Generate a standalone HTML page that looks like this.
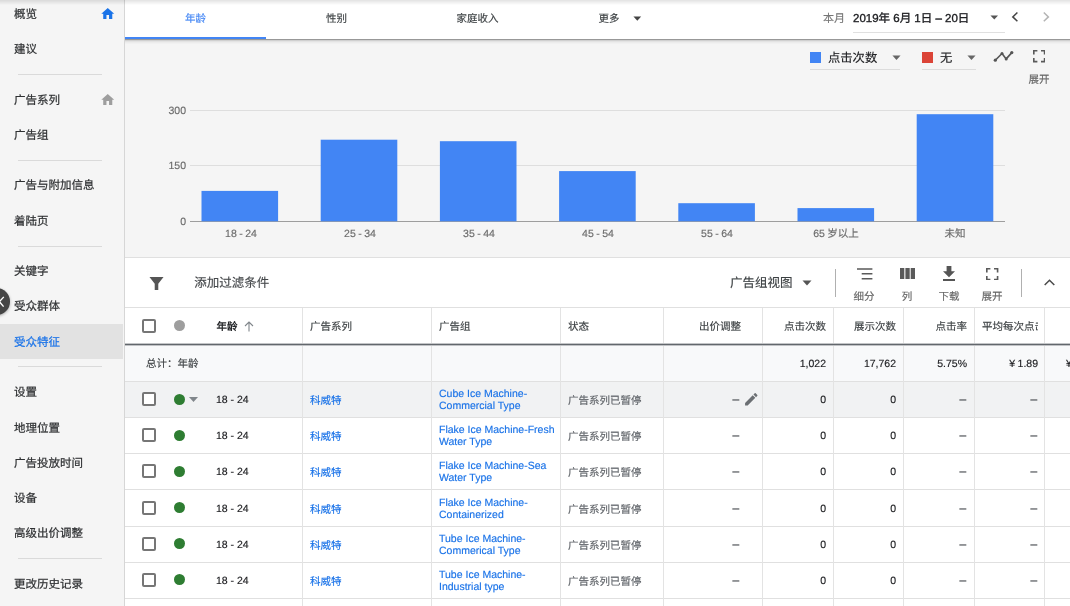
<!DOCTYPE html>
<html lang="zh-CN">
<head>
<meta charset="utf-8">
<title>受众特征</title>
<style>
*{box-sizing:border-box;margin:0;padding:0}
html,body{width:1070px;height:606px;overflow:hidden}
body{text-rendering:geometricPrecision;font-family:"Liberation Sans",sans-serif;background:#f5f5f5;color:#3c4043;position:relative;font-size:11.5px}
#root{-webkit-text-stroke-width:0.15px;position:absolute;left:0;top:0;width:1070px;height:606px;will-change:transform}
.abs{position:absolute}
/* sidebar */
#side{position:absolute;left:0;top:0;width:125px;height:606px;background:#f5f5f5;border-right:1px solid #d6d6d6}
#side .it{-webkit-text-stroke-width:0.22px;position:absolute;left:14px;height:18px;line-height:18px;font-size:11.5px;color:#2f3133;white-space:nowrap}
#side .dv{position:absolute;left:18px;width:84px;height:1px;background:#dadada}
#side .act{position:absolute;left:0;top:324px;width:123px;height:35px;background:#e2e2e2}
/* tabs */
#tabs{position:absolute;left:125px;top:0;width:945px;height:39px;background:#fff}
#tabs .tb{position:absolute;top:1px;height:37px;line-height:37px;text-align:center;font-size:10.5px;color:#3c4043}
#topsh{position:absolute;left:0;top:0;width:1070px;height:5px;background:linear-gradient(rgba(0,0,0,.115),rgba(0,0,0,0))}
#tabsh{position:absolute;left:125px;top:39px;width:945px;height:6px;background:linear-gradient(rgba(0,0,0,.38) 0 1px,rgba(0,0,0,.15) 1px 2px,rgba(0,0,0,.07) 2px 3px,rgba(0,0,0,.035) 3px 4px,rgba(0,0,0,.015) 4px 5px,rgba(0,0,0,0) 5px)}
/* chart */
#chart{position:absolute;left:125px;top:40px;width:945px;height:217px;background:#f5f5f5}
.gl{position:absolute;left:190px;width:815px;height:1px;background:#dedede}
.yl{position:absolute;width:40px;text-align:right;left:146px;font-size:10.5px;color:#6b6b6b;height:12px;line-height:12px}
.bar{position:absolute;width:77px;background:#4285f4}
.xl{position:absolute;width:119px;text-align:center;font-size:10.5px;color:#6b6b6b;top:228px;word-spacing:-0.4px;height:12px;line-height:12px}
/* toolbar */
#tool{position:absolute;left:125px;top:257px;width:945px;height:51px;background:#fff;border-top:1px solid #e0e0e0}
/* table */
#tbl{position:absolute;left:125px;top:307px;width:945px;height:299px;background:#fff}
.row{position:absolute;left:125px;width:945px;border-bottom:1px solid #e0e0e0}
.vl{position:absolute;top:308px;width:1px;height:298px;background:#e3e3e3}
.c{position:absolute;white-space:nowrap;font-size:10.5px;height:14px;line-height:14px;margin-top:1px}
.h{color:#3c4043}
.cb{position:absolute;left:142px;width:14px;height:14px;border:2px solid #767676;border-radius:2px;background:#fff}
.dot{position:absolute;left:174px;width:11px;height:11px;border-radius:50%;background:#2e7d32}
.lk{color:#1a73e8}
.num{text-align:right}
.gr{color:#5f6368}
.v{color:#202124}
.ds{font-size:12px;color:#4a4e52;-webkit-text-stroke-width:0.2px;margin-top:-0.5px}
.tl{top:30.5px;width:40px;text-align:center;font-size:10.5px;color:#666;height:16px;line-height:16px}
</style>
</head>
<body><div id="root">
<div id="side">
  <div class="act"></div>
  <div class="it" style="top:6px">概览</div>
  <div class="it" style="top:41px">建议</div>
  <div class="dv" style="top:74px"></div>
  <div class="it" style="top:92px">广告系列</div>
  <div class="it" style="top:127px">广告组</div>
  <div class="dv" style="top:160px"></div>
  <div class="it" style="top:177px">广告与附加信息</div>
  <div class="it" style="top:213px">着陆页</div>
  <div class="dv" style="top:246px"></div>
  <div class="it" style="top:263px">关键字</div>
  <div class="it" style="top:298px">受众群体</div>
  <div class="it" style="top:334px;color:#1a73e8">受众特征</div>
  <div class="it" style="top:384px">设置</div>
  <div class="it" style="top:420px">地理位置</div>
  <div class="it" style="top:455px">广告投放时间</div>
  <div class="it" style="top:490px">设备</div>
  <div class="it" style="top:525px">高级出价调整</div>
  <div class="dv" style="top:366px"></div>
  <div class="dv" style="top:558px"></div>
  <div class="it" style="top:576px">更改历史记录</div>
  <svg class="abs" style="left:100px;top:6.2px" width="15.5" height="15.5" viewBox="0 0 24 24"><path fill="#1a73e8" d="M10 20v-6h4v6h5v-8h3L12 3 2 12h3v8z"/></svg>
  <svg class="abs" style="left:100px;top:92.2px" width="15.5" height="15.5" viewBox="0 0 24 24"><path fill="#9e9e9e" d="M10 20v-6h4v6h5v-8h3L12 3 2 12h3v8z"/></svg>
  <div class="abs" style="left:-16.7px;top:288.3px;width:26.6px;height:26.6px;border-radius:50%;background:#454545;box-shadow:0 1px 3px rgba(0,0,0,.3)"></div>
  <svg class="abs" style="left:0;top:294px" width="8" height="16" viewBox="0 0 8 16"><path d="M3.8 2.9L-0.6 7.7L3.6 12.6" stroke="#fff" stroke-width="1.4" fill="none"/></svg>
</div>

<div id="chart">
</div>
<div class="gl" style="top:110px"></div>
<div class="gl" style="top:165px"></div>
<div class="gl" style="top:221px;background:#9e9e9e"></div>
<div class="yl" style="top:105px">300</div>
<div class="yl" style="top:160px">150</div>
<div class="yl" style="top:216px">0</div>
<svg class="abs" style="left:125px;top:40px" width="945" height="217" viewBox="0 0 945 217" fill="#4285f4"><rect x="76.5" y="150.9" width="76.6" height="30.4"/><rect x="195.7" y="99.7" width="76.6" height="81.6"/><rect x="314.9" y="101.2" width="76.6" height="80.1"/><rect x="434.1" y="131.1" width="76.6" height="50.2"/><rect x="553.3" y="163.2" width="76.6" height="18.1"/><rect x="672.5" y="168.1" width="76.6" height="13.2"/><rect x="791.7" y="74.2" width="76.6" height="107.1"/></svg>
<div class="xl" style="left:181.5px">18 - 24</div>
<div class="xl" style="left:300.5px">25 - 34</div>
<div class="xl" style="left:419.5px">35 - 44</div>
<div class="xl" style="left:538.5px">45 - 54</div>
<div class="xl" style="left:657.5px">55 - 64</div>
<div class="xl" style="left:776.5px">65 岁以上</div>
<div class="xl" style="left:895.5px">未知</div>


<div id="legend">
  <div class="abs" style="left:810px;top:52px;width:11px;height:11px;background:#4285f4"></div>
  <div class="abs" style="left:828px;top:49px;font-size:12.3px;color:#202124;height:18px;line-height:18px;white-space:nowrap">点击次数</div>
  <svg class="abs" style="left:891.6px;top:55.2px" width="9" height="5.4" viewBox="0 0 10 6"><path d="M0.5 0.5h9L5 5.5z" fill="#666"/></svg>
  <div class="abs" style="left:810px;top:69px;width:90px;height:1px;background:#dcdcdc"></div>
  <div class="abs" style="left:922px;top:52px;width:11px;height:11px;background:#db4437"></div>
  <div class="abs" style="left:940px;top:49px;font-size:12.3px;color:#202124;height:18px;line-height:18px">无</div>
  <svg class="abs" style="left:966.6px;top:55.2px" width="9" height="5.4" viewBox="0 0 10 6"><path d="M0.5 0.5h9L5 5.5z" fill="#666"/></svg>
  <div class="abs" style="left:922px;top:69px;width:54px;height:1px;background:#dcdcdc"></div>
  <svg class="abs" style="left:993px;top:49px" width="22" height="16" viewBox="0 0 22 16"><path d="M2.3 11.2L9 4.5L13.2 9.9L18.8 3.6" stroke="#555" stroke-width="1.6" fill="none" stroke-linejoin="round"/><circle cx="2.3" cy="11.2" r="1.6" fill="#555"/><circle cx="9" cy="4.5" r="1.5" fill="#555"/><circle cx="13.2" cy="9.9" r="1.5" fill="#555"/><circle cx="18.8" cy="3.6" r="1.6" fill="#555"/></svg>
  <svg class="abs" style="left:1032.8px;top:50.3px" width="12.4" height="12.4" viewBox="0 0 13 13"><path d="M0.85 4.6V0.85H4.6M8.4 0.85h3.75V4.6M12.15 8.4v3.75H8.4M4.6 12.15H0.85V8.4" stroke="#5a5a5a" stroke-width="1.7" fill="none"/></svg>
  <div class="abs" style="left:1019px;top:72px;width:40px;text-align:center;font-size:10.5px;color:#666;height:16px;line-height:16px">展开</div>
</div>
<div id="tabs">
  <div class="tb" style="left:0;width:141px;color:#4285f4">年龄</div>
  <div class="tb" style="left:141px;width:141px">性别</div>
  <div class="tb" style="left:282px;width:141px">家庭收入</div>
  <div class="tb" style="left:473px;width:22px">更多</div>
  <div class="abs" style="left:0;top:37px;width:141px;height:2px;background:#4285f4"></div>
  <svg class="abs" style="left:508.2px;top:15.6px" width="8.6" height="5.2" viewBox="0 0 10 6"><path d="M0.5 0.5h9L5 5.5z" fill="#444"/></svg>
  <div class="abs" style="left:698px;top:10px;font-size:11px;color:#757575;height:18px;line-height:18px">本月</div>
  <div class="abs" style="left:728px;top:10px;font-size:11.5px;color:#202124;height:18px;line-height:18px;font-weight:500;-webkit-text-stroke:0.35px #202124;white-space:nowrap" id="date">2019年 6月 1日 – 20日</div>
  <div class="abs" style="left:728px;top:32px;width:152px;height:1px;background:#e0e0e0"></div>
  <svg class="abs" style="left:864.7px;top:15px" width="8.6" height="4.8" viewBox="0 0 10 6" preserveAspectRatio="none"><path d="M0.5 0.5h9L5 5.5z" fill="#555"/></svg>
  <svg class="abs" style="left:885px;top:10px" width="10" height="14" viewBox="0 0 10 14"><path d="M7.4 2.5L2.8 6.9L7.4 11.3" stroke="#444" stroke-width="1.5" fill="none"/></svg>
  <svg class="abs" style="left:916px;top:10px" width="10" height="14" viewBox="0 0 10 14"><path d="M2.8 2.5L7.4 6.9L2.8 11.3" stroke="#b4b4b4" stroke-width="1.5" fill="none"/></svg>
</div>
<div id="tabsh"></div>
<div id="topsh"></div>

<div id="tool">
  <svg class="abs" style="left:24.2px;top:17.6px" width="15" height="15" viewBox="0 0 16 16"><path d="M0.5 1h15L9.9 8.2V15H6.1V8.2z" fill="#555"/></svg>
  <div class="abs" style="left:69.3px;top:15px;font-size:12.5px;color:#45484b;height:20px;line-height:20px;white-space:nowrap">添加过滤条件</div>
  <div class="abs" style="left:605px;top:15px;font-size:12.5px;color:#3c4043;height:20px;line-height:20px;white-space:nowrap">广告组视图</div>
  <svg class="abs" style="left:677px;top:22px" width="10" height="6" viewBox="0 0 10 6"><path d="M0.5 0.5h9L5 5.5z" fill="#555"/></svg>
  <div class="abs" style="left:710px;top:11px;width:1px;height:28px;background:#b0b0b0"></div>
  <svg class="abs" style="left:731.8px;top:9.5px" width="16" height="12" viewBox="0 0 16 12"><path d="M0 0.9h15.4M4.7 5.7h10.7M4.7 10.8h10.7" stroke="#5a5a5a" stroke-width="1.5"/></svg>
  <div class="abs tl" style="left:719px">细分</div>
  <svg class="abs" style="left:775.2px;top:9.7px" width="15" height="11.3" viewBox="0 0 15 12" preserveAspectRatio="none"><path d="M0 0h4.3v12H0zM5.4 0h4.3v12H5.4zM10.7 0H15v12h-4.3z" fill="#5a5a5a"/></svg>
  <div class="abs tl" style="left:762px">列</div>
  <svg class="abs" style="left:818px;top:8px" width="12" height="15" viewBox="0 0 12 15"><path d="M3.6 0h4.8v5.2H12L6 11.2L0 5.2h3.6zM0 13h12v2H0z" fill="#555"/></svg>
  <div class="abs tl" style="left:804px">下载</div>
  <svg class="abs" style="left:861.2px;top:9.7px" width="12.4" height="12.4" viewBox="0 0 13 13"><path d="M0.85 4.6V0.85H4.6M8.4 0.85h3.75V4.6M12.15 8.4v3.75H8.4M4.6 12.15H0.85V8.4" stroke="#5a5a5a" stroke-width="1.7" fill="none"/></svg>
  <div class="abs tl" style="left:847px">展开</div>
  <div class="abs" style="left:896px;top:11px;width:1px;height:28px;background:#b0b0b0"></div>
  <svg class="abs" style="left:918px;top:20px" width="13" height="9" viewBox="0 0 13 9"><path d="M1.7 7L6.5 2.2L11.3 7" stroke="#4a4a4a" stroke-width="1.5" fill="none"/></svg>
</div>
<div id="tbl"></div>
<div class="abs" style="left:125px;top:346px;width:945px;height:35px;background:#f8f9fa"></div>
<div class="abs" style="left:125px;top:382px;width:945px;height:35px;background:#f1f2f3"></div>
<div class="abs" style="left:125px;top:307px;width:945px;height:1px;background:#e0e0e0"></div>
<div class="abs" style="left:125px;top:381px;width:945px;height:1px;background:#e0e0e0"></div>
<div class="abs" style="left:125px;top:417px;width:945px;height:1px;background:#e0e0e0"></div>
<div class="abs" style="left:125px;top:453px;width:945px;height:1px;background:#e0e0e0"></div>
<div class="abs" style="left:125px;top:489px;width:945px;height:1px;background:#e0e0e0"></div>
<div class="abs" style="left:125px;top:526px;width:945px;height:1px;background:#e0e0e0"></div>
<div class="abs" style="left:125px;top:562px;width:945px;height:1px;background:#e0e0e0"></div>
<div class="abs" style="left:125px;top:598px;width:945px;height:1px;background:#e0e0e0"></div>
<div class="vl" style="left:302px"></div>
<div class="vl" style="left:431px"></div>
<div class="vl" style="left:560px"></div>
<div class="vl" style="left:663px"></div>
<div class="vl" style="left:762px"></div>
<div class="vl" style="left:833px"></div>
<div class="vl" style="left:903px"></div>
<div class="vl" style="left:974px"></div>
<div class="vl" style="left:1044px"></div>
<div class="abs" style="left:125px;top:343px;width:945px;height:1px;background:#c3c5c7"></div><div class="abs" style="left:125px;top:344px;width:945px;height:1px;background:#62676c"></div><div class="abs" style="left:125px;top:345px;width:945px;height:1px;background:#c0c2c5"></div>
<div class="cb" style="top:319px"></div>
<div class="dot" style="top:320px;background:#9e9e9e"></div>
<div class="c h" style="left:216.5px;top:319px;font-weight:bold;color:#26282b;-webkit-text-stroke-width:0">年龄</div>
<svg class="abs" style="left:244px;top:321px" width="10" height="11" viewBox="0 0 10 11"><path d="M5 10.5V1.2M1 5L5 1L9 5" stroke="#80868b" stroke-width="1.1" fill="none"/></svg>
<div class="c h" style="left:310px;top:319px">广告系列</div>
<div class="c h" style="left:439px;top:319px">广告组</div>
<div class="c h" style="left:568px;top:319px">状态</div>
<div class="c h num" style="left:621px;width:120px;top:319px;">出价调整</div>
<div class="c h num" style="left:706px;width:120px;top:319px;">点击次数</div>
<div class="c h num" style="left:776px;width:120px;top:319px;">展示次数</div>
<div class="c h num" style="left:847px;width:120px;top:319px;">点击率</div>
<div class="c h" style="left:982px;top:319px;width:56px;overflow:hidden">平均每次点击费用</div>
<div class="c" style="left:146px;top:356px;font-size:10.5px;color:#3c4043">总计：年龄</div>
<div class="c v num" style="left:706px;width:120px;top:356px;">1,022</div>
<div class="c v num" style="left:776px;width:120px;top:356px;">17,762</div>
<div class="c v num" style="left:847px;width:120px;top:356px;">5.75%</div>
<div class="c v num" style="left:918px;width:120px;top:356px;"><span style="margin-right:2.5px">¥</span>1.89</div>
<div class="c v" style="left:1066px;top:356px">¥</div>
<div class="cb" style="top:392px"></div>
<div class="dot" style="top:394px"></div>
<svg class="abs" style="left:189px;top:397px" width="9" height="5" viewBox="0 0 9 5"><path d="M0 0h9L4.5 5z" fill="#80868b"/></svg>
<div class="c v" style="left:216px;top:392px">18 - 24</div>
<div class="c lk" style="left:310px;top:393px;font-size:10.5px">科威特</div>
<div class="c lk" style="left:439px;top:386.5px;line-height:12.5px;height:25px">Cube Ice Machine-<br>Commercial Type</div>
<div class="c gr" style="left:568px;top:393px;font-size:10.5px">广告系列已暂停</div>
<div class="c v ds" style="left:732.5px;top:392px">–</div>
<svg class="abs" style="left:742.8px;top:391.1px" width="16.6" height="16.6" viewBox="0 0 24 24"><path fill="#6b6f73" d="M3 17.25V21h3.75L17.81 9.94l-3.75-3.75L3 17.25zM20.71 7.04a1 1 0 000-1.41l-2.34-2.34a1 1 0 00-1.41 0l-1.83 1.83 3.75 3.75 1.83-1.83z"/></svg>
<div class="c v num" style="left:706px;width:120px;top:392px;">0</div>
<div class="c v num" style="left:776px;width:120px;top:392px;">0</div>
<div class="c v ds" style="left:959.5px;top:392px">–</div>
<div class="c v ds" style="left:1030.5px;top:392px">–</div>
<div class="cb" style="top:428px"></div>
<div class="dot" style="top:430px"></div>
<div class="c v" style="left:216px;top:428px">18 - 24</div>
<div class="c lk" style="left:310px;top:429px;font-size:10.5px">科威特</div>
<div class="c lk" style="left:439px;top:422.5px;line-height:12.5px;height:25px">Flake Ice Machine-Fresh<br>Water Type</div>
<div class="c gr" style="left:568px;top:429px;font-size:10.5px">广告系列已暂停</div>
<div class="c v ds" style="left:732.5px;top:428px">–</div>
<div class="c v num" style="left:706px;width:120px;top:428px;">0</div>
<div class="c v num" style="left:776px;width:120px;top:428px;">0</div>
<div class="c v ds" style="left:959.5px;top:428px">–</div>
<div class="c v ds" style="left:1030.5px;top:428px">–</div>
<div class="cb" style="top:464px"></div>
<div class="dot" style="top:466px"></div>
<div class="c v" style="left:216px;top:464px">18 - 24</div>
<div class="c lk" style="left:310px;top:465px;font-size:10.5px">科威特</div>
<div class="c lk" style="left:439px;top:458.5px;line-height:12.5px;height:25px">Flake Ice Machine-Sea<br>Water Type</div>
<div class="c gr" style="left:568px;top:465px;font-size:10.5px">广告系列已暂停</div>
<div class="c v ds" style="left:732.5px;top:464px">–</div>
<div class="c v num" style="left:706px;width:120px;top:464px;">0</div>
<div class="c v num" style="left:776px;width:120px;top:464px;">0</div>
<div class="c v ds" style="left:959.5px;top:464px">–</div>
<div class="c v ds" style="left:1030.5px;top:464px">–</div>
<div class="cb" style="top:501px"></div>
<div class="dot" style="top:502px"></div>
<div class="c v" style="left:216px;top:501px">18 - 24</div>
<div class="c lk" style="left:310px;top:502px;font-size:10.5px">科威特</div>
<div class="c lk" style="left:439px;top:495.5px;line-height:12.5px;height:25px">Flake Ice Machine-<br>Containerized</div>
<div class="c gr" style="left:568px;top:502px;font-size:10.5px">广告系列已暂停</div>
<div class="c v ds" style="left:732.5px;top:501px">–</div>
<div class="c v num" style="left:706px;width:120px;top:501px;">0</div>
<div class="c v num" style="left:776px;width:120px;top:501px;">0</div>
<div class="c v ds" style="left:959.5px;top:501px">–</div>
<div class="c v ds" style="left:1030.5px;top:501px">–</div>
<div class="cb" style="top:537px"></div>
<div class="dot" style="top:538px"></div>
<div class="c v" style="left:216px;top:537px">18 - 24</div>
<div class="c lk" style="left:310px;top:538px;font-size:10.5px">科威特</div>
<div class="c lk" style="left:439px;top:531.5px;line-height:12.5px;height:25px">Tube Ice Machine-<br>Commerical Type</div>
<div class="c gr" style="left:568px;top:538px;font-size:10.5px">广告系列已暂停</div>
<div class="c v ds" style="left:732.5px;top:537px">–</div>
<div class="c v num" style="left:706px;width:120px;top:537px;">0</div>
<div class="c v num" style="left:776px;width:120px;top:537px;">0</div>
<div class="c v ds" style="left:959.5px;top:537px">–</div>
<div class="c v ds" style="left:1030.5px;top:537px">–</div>
<div class="cb" style="top:573px"></div>
<div class="dot" style="top:574px"></div>
<div class="c v" style="left:216px;top:573px">18 - 24</div>
<div class="c lk" style="left:310px;top:574px;font-size:10.5px">科威特</div>
<div class="c lk" style="left:439px;top:567.5px;line-height:12.5px;height:25px">Tube Ice Machine-<br>Industrial type</div>
<div class="c gr" style="left:568px;top:574px;font-size:10.5px">广告系列已暂停</div>
<div class="c v ds" style="left:732.5px;top:573px">–</div>
<div class="c v num" style="left:706px;width:120px;top:573px;">0</div>
<div class="c v num" style="left:776px;width:120px;top:573px;">0</div>
<div class="c v ds" style="left:959.5px;top:573px">–</div>
<div class="c v ds" style="left:1030.5px;top:573px">–</div>

</div></body>
</html>
